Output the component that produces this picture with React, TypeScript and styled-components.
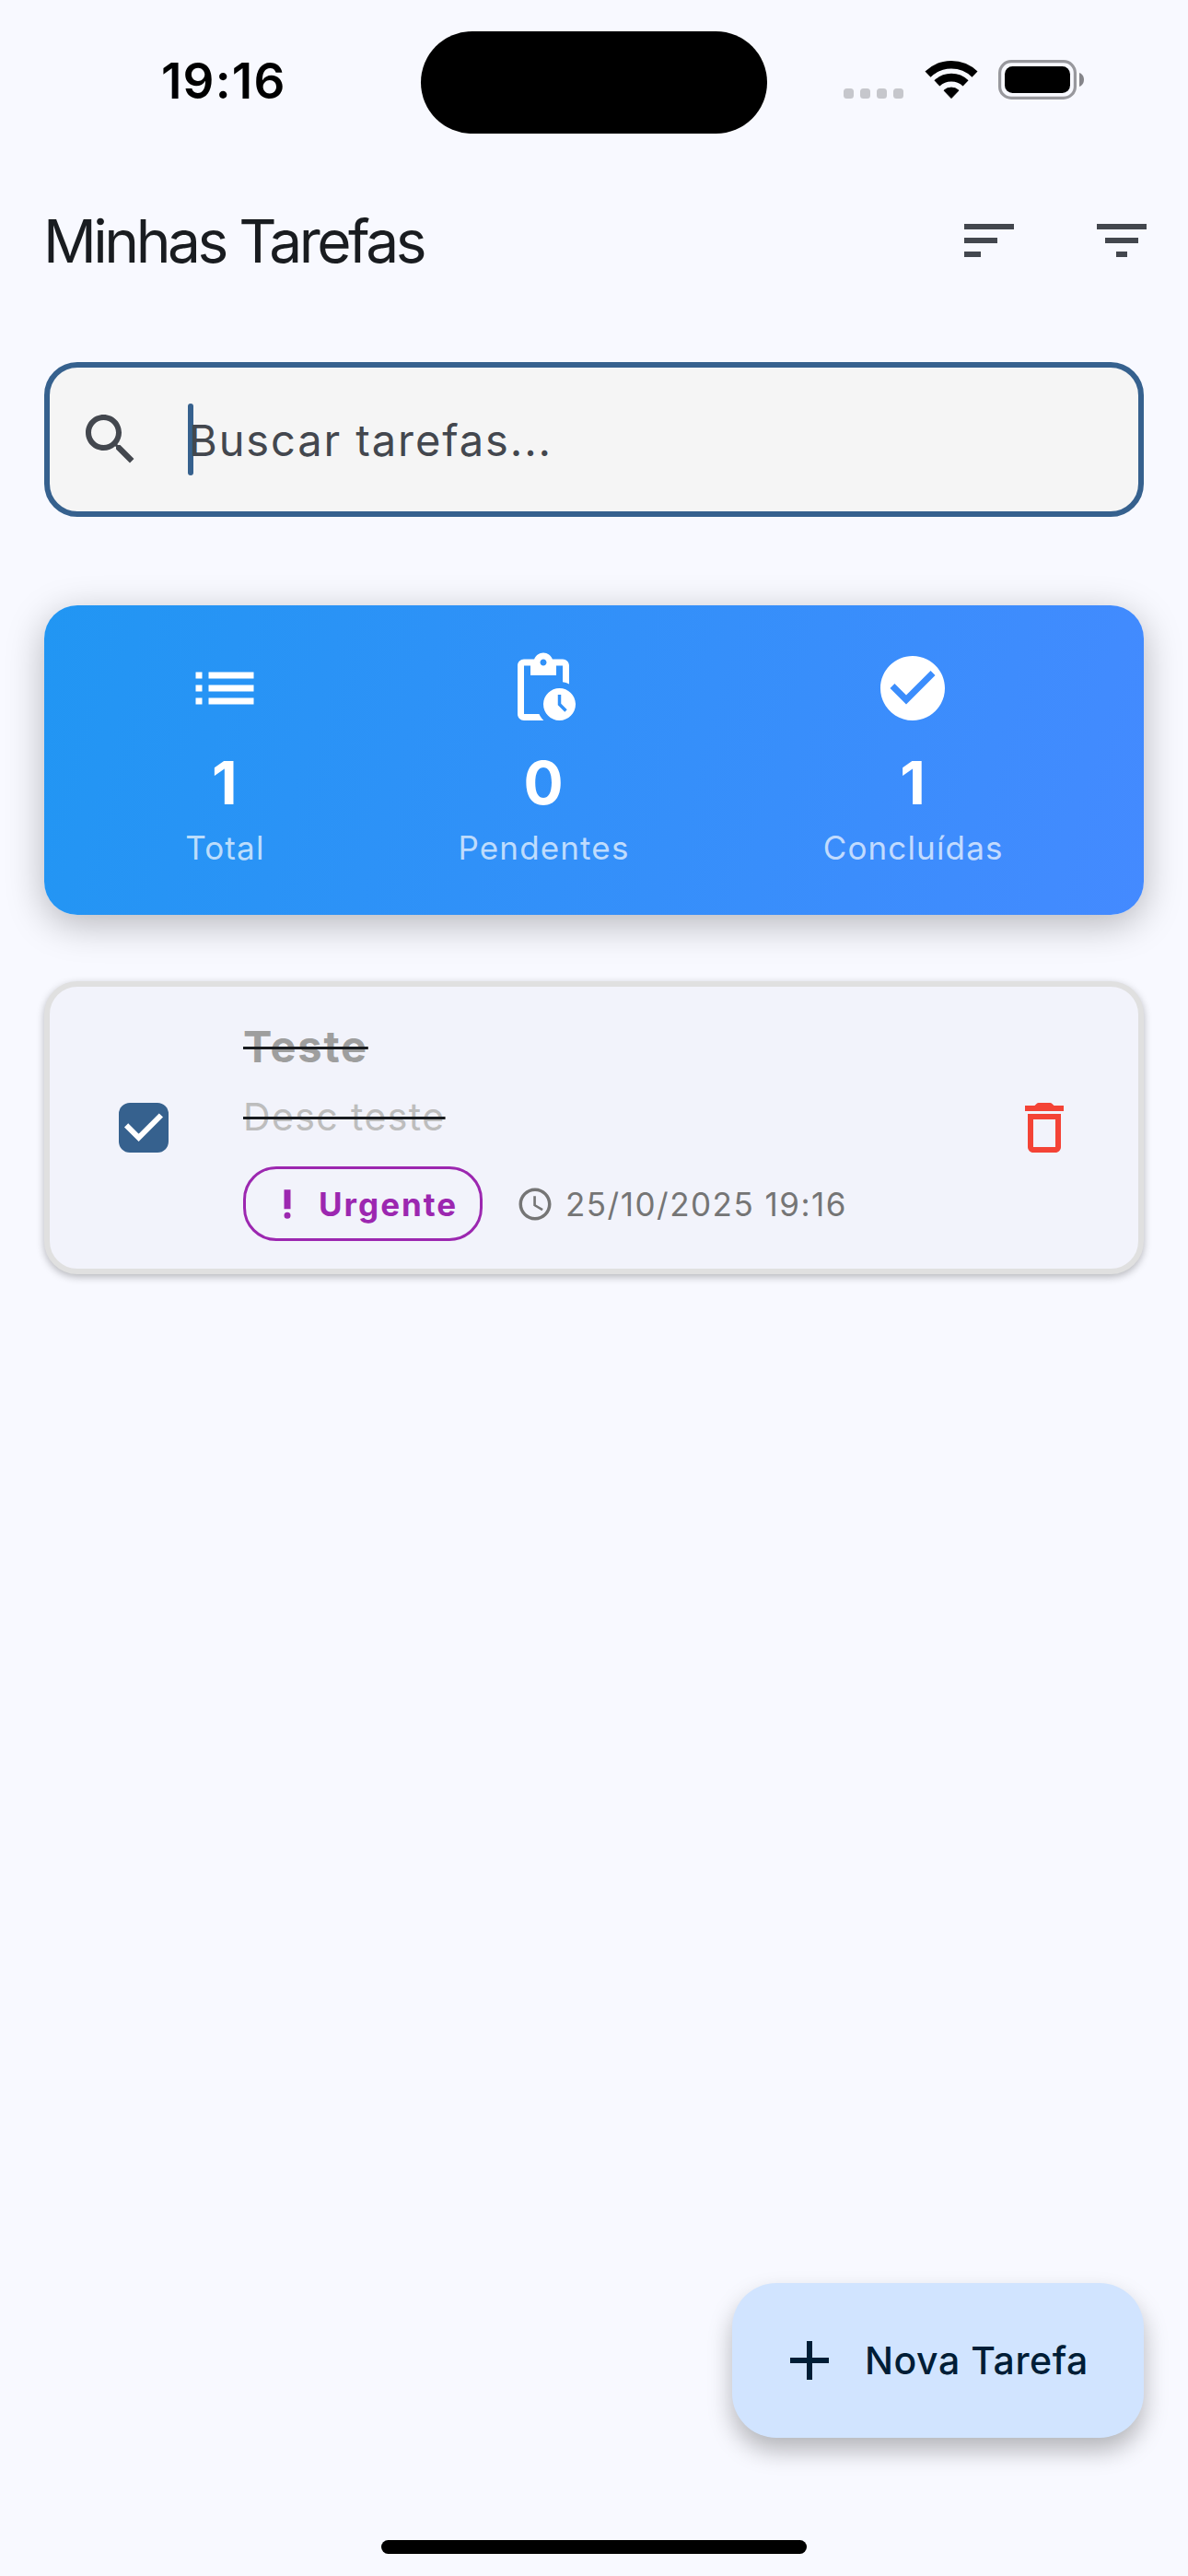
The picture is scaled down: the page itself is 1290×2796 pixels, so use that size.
import React from "react";
import styled, { createGlobalStyle, css } from "styled-components";

const GlobalStyle = createGlobalStyle`
  *, *::before, *::after { box-sizing: border-box; }
  html, body { margin: 0; padding: 0; background: #f8f9ff; }
  body { font-family: Inter, "Liberation Sans", sans-serif; }
`;

const Screen = styled.main`
  width: 1290px;
  height: 2796px;
  display: flex;
  flex-direction: column;
  background: #f8f9ff;
  overflow: hidden;
`;

const StatusBar = styled.header`
  display: grid;
  grid-template-columns: 457px 376px 457px;
  align-items: center;
  height: 177px;
  flex: none;
`;

const Text = styled.span<{ $size: number; $weight?: number; $spacing?: number; $color: string }>`
  display: block;
  white-space: nowrap;
  font-size: ${(p) => p.$size}px;
  line-height: ${(p) => Math.round(p.$size * 1.25)}px;
  font-weight: ${(p) => p.$weight ?? 400};
  letter-spacing: ${(p) => p.$spacing ?? 0}px;
  color: ${(p) => p.$color};
`;

const Time = styled(Text)`
  padding: 0 0 2px 175px;
`;

const Island = styled.div`
  height: 111px;
  margin-top: 1px;
  border-radius: 56px;
  background: #000;
`;

const StatusIcons = styled.div`
  display: flex;
  align-items: flex-end;
  gap: 22px;
  padding: 0 0 3px 83px;
  height: 45px;
`;

const Signal = styled.div`
  display: flex;
  gap: 7px;
  padding-bottom: 1px;
  margin-right: 1px;
`;

const SignalDot = styled.i`
  width: 11px;
  height: 11px;
  border-radius: 3.5px;
  background: #c6c7cc;
`;

const Drawing = styled.svg`
  display: block;
  flex: none;
`;

const AppBar = styled.div`
  display: flex;
  align-items: center;
  height: 168px;
  padding: 0 36px 0 47px;
  flex: none;
`;

const AppTitle = styled(Text)`
  flex: 1;
  margin: 0;
  padding-top: 2px;
`;

const Actions = styled.div`
  display: flex;
  gap: 72px;
`;

const Content = styled.div`
  flex: 1;
  display: flex;
  flex-direction: column;
  padding: 48px 48px 0;
`;

const SearchField = styled.label`
  display: flex;
  align-items: center;
  height: 168px;
  padding-left: 30px;
  border: 6px solid #36618e;
  border-radius: 36px;
  background: #f5f5f5;
`;

const Caret = styled.i`
  width: 6px;
  height: 78px;
  margin-left: 48px;
  border-radius: 3px;
  background: #36618e;
`;

const Placeholder = styled(Text)`
  margin-left: -5px;
  padding-top: 1px;
`;

const StatsCard = styled.section`
  display: flex;
  justify-content: space-around;
  margin-top: 96px;
  height: 336px;
  padding: 48px;
  border-radius: 36px;
  background: linear-gradient(105.7deg, #2196f3, #448aff);
  box-shadow: 0 10px 40px rgba(0, 0, 0, 0.27);
`;

const Stat = styled.div<{ $width: number }>`
  display: flex;
  flex-direction: column;
  align-items: center;
  width: ${(p) => p.$width}px;
`;

const StatValue = styled(Text)`
  margin-top: 21px;
`;

const StatLabel = styled(Text)`
  margin-top: 8px;
  padding-left: 1px;
`;

const TaskCard = styled.article`
  display: flex;
  align-items: center;
  margin-top: 72px;
  height: 318px;
  padding: 0 66px 0 75px;
  border: 6px solid #e0e0e0;
  border-radius: 36px;
  background: #f2f3fb;
  box-shadow: 0 3px 8px rgba(0, 0, 0, 0.27);
`;

const Checkbox = styled.span`
  width: 54px;
  height: 54px;
  border-radius: 12px;
  background: #36618e;
`;

const TaskBody = styled.div`
  flex: 1;
  align-self: stretch;
  display: flex;
  flex-direction: column;
  align-items: flex-start;
  padding: 35px 0 0 81px;
`;

const struck = css`
  text-decoration: line-through;
  text-decoration-color: #191c20;
  text-decoration-thickness: 3px;
`;

const TaskTitle = styled(Text)`
  ${struck}
`;

const TaskDescription = styled(Text)`
  ${struck}
  margin-top: 22px;
`;

const MetaRow = styled.div`
  display: flex;
  align-items: center;
  margin-top: 28px;
`;

const Chip = styled.span`
  display: flex;
  align-items: center;
  gap: 13px;
  width: 260px;
  height: 81px;
  padding-left: 24px;
  margin-right: 36px;
  border: 3px solid #9c27b0;
  border-radius: 36px;
`;

const DateText = styled(Text)`
  margin-left: 12px;
`;

const Footer = styled.footer`
  display: flex;
  flex-direction: column;
  align-items: flex-end;
  padding-right: 48px;
  height: 318px;
  flex: none;
`;

const NewTaskButton = styled.button`
  display: flex;
  align-items: center;
  gap: 24px;
  width: 447px;
  height: 168px;
  padding: 0 0 0 48px;
  border: 0;
  border-radius: 48px;
  background: #d1e4ff;
  font-family: inherit;
  box-shadow: 0 14px 26px rgba(0, 0, 0, 0.27);
`;

const HomeIndicator = styled.div`
  width: 462px;
  height: 15px;
  margin: 111px 366px 0 0;
  border-radius: 8px;
  background: #000;
`;

const ICONS = {
  sort: "M3 18h6v-2H3v2zM3 6v2h18V6H3zm0 7h12v-2H3v2z",
  filter: "M10 18h4v-2h-4v2zM3 6v2h18V6H3zm3 7h12v-2H6v2z",
  search:
    "M15.5 14h-.79l-.28-.27C15.41 12.59 16 11.11 16 9.5 16 5.91 13.09 3 9.5 3S3 5.91 3 9.5 5.91 16 9.5 16c1.61 0 3.09-.59 4.23-1.57l.27.28v.79l5 4.99L20.49 19l-4.99-5zm-6 0C7.01 14 5 11.99 5 9.5S7.01 5 9.5 5 14 7.01 14 9.5 11.99 14 9.5 14z",
  list: "M3 13h2v-2H3v2zm0 4h2v-2H3v2zm0-8h2V7H3v2zm4 4h14v-2H7v2zm0 4h14v-2H7v2zM7 7v2h14V7H7z",
  pending:
    "M17 12c-2.76 0-5 2.24-5 5s2.24 5 5 5 5-2.24 5-5-2.24-5-5-5zm1.65 7.35L16.5 17.2V14h1v2.79l1.85 1.85-.7.71zM18 3h-3.18C14.4 1.84 13.3 1 12 1s-2.4.84-2.82 2H6c-1.1 0-2 .9-2 2v15c0 1.1.9 2 2 2h6.11c-.59-.57-1.07-1.25-1.42-2H6V5h2v3h8V5h2v5.08c.71.1 1.38.31 2 .6V5c0-1.1-.9-2-2-2zm-6 2c-.55 0-1-.45-1-1s.45-1 1-1 1 .45 1 1-.45 1-1 1z",
  done: "M12 2C6.48 2 2 6.48 2 12s4.48 10 10 10 10-4.48 10-10S17.52 2 12 2zm-2 15l-5-5 1.41-1.41L10 14.17l7.59-7.59L19 8l-9 9z",
  priority: "M10 3h4v12h-4zM12 17a2 2 0 1 0 0 4 2 2 0 0 0 0-4z",
  clock:
    "M11.99 2C6.47 2 2 6.48 2 12s4.47 10 9.99 10C17.52 22 22 17.52 22 12S17.52 2 11.99 2zM12 20c-4.42 0-8-3.58-8-8s3.58-8 8-8 8 3.58 8 8-3.58 8-8 8zm.5-13H11v6l5.25 3.15.75-1.23-4.5-2.67z",
  trash:
    "M6 19c0 1.1.9 2 2 2h8c1.1 0 2-.9 2-2V7H6v12zM8 9h8v10H8V9zm7.5-5l-.7-.7q-.3-.3-.7-.3h-4.2q-.4 0-.7.3l-.7.7H5v2h14V4h-3.5z",
  plus: "M19 13h-6v6h-2v-6H5v-2h6V5h2v6h6v2z",
};

function Icon({ name, size, color }: { name: keyof typeof ICONS; size: number; color: string }) {
  return (
    <Drawing width={size} height={size} viewBox="0 0 24 24" fill={color} aria-hidden>
      <path d={ICONS[name]} />
    </Drawing>
  );
}

function WifiIcon() {
  return (
    <Drawing width="58" height="43" viewBox="0 0 58 43" aria-hidden>
      <path
        d="M29 41.6 21 33.2a11.8 11.8 0 0 1 16 0z"
        stroke="#000"
        strokeWidth="1"
        strokeLinejoin="round"
      />
      <path d="M13.4 25.4a22.5 22.5 0 0 1 31.2 0" fill="none" stroke="#000" strokeWidth="8.6" />
      <path d="M3.5 15.6a36.5 36.5 0 0 1 51 0" fill="none" stroke="#000" strokeWidth="8.6" />
    </Drawing>
  );
}

function BatteryIcon() {
  return (
    <Drawing width="94" height="43" viewBox="0 0 94 43" aria-hidden>
      <rect x="1.6" y="1.6" width="81.8" height="39.8" rx="12.5" fill="none" stroke="#98989d" strokeWidth="3.2" />
      <rect x="7" y="7" width="71" height="29" rx="8.5" />
      <path d="M88 14c3 1 5 4 5 7.5s-2 6.5-5 7.5z" fill="#85858a" />
    </Drawing>
  );
}

const STATS: { icon: keyof typeof ICONS; value: number; label: string; width: number }[] = [
  { icon: "list", value: 1, label: "Total", width: 86 },
  { icon: "pending", value: 0, label: "Pendentes", width: 187 },
  { icon: "done", value: 1, label: "Concluídas", width: 196 },
];

export default function App() {
  return (
    <>
      <GlobalStyle />
      <Screen>
        <StatusBar>
          <Time $size={53} $weight={600} $spacing={1.2} $color="#000">19:16</Time>
          <Island />
          <StatusIcons>
            <Signal>
              <SignalDot />
              <SignalDot />
              <SignalDot />
              <SignalDot />
            </Signal>
            <WifiIcon />
            <BatteryIcon />
          </StatusIcons>
        </StatusBar>

        <AppBar>
          <AppTitle as="h1" $size={64} $spacing={-3.5} $color="#191c20">Minhas Tarefas</AppTitle>
          <Actions>
            <Icon name="sort" size={72} color="#43474e" />
            <Icon name="filter" size={72} color="#43474e" />
          </Actions>
        </AppBar>

        <Content>
          <SearchField>
            <Icon name="search" size={72} color="#43474e" />
            <Caret />
            <Placeholder $size={47} $spacing={1.9} $color="#43474e">Buscar tarefas...</Placeholder>
          </SearchField>

          <StatsCard>
            {STATS.map((s) => (
              <Stat key={s.label} $width={s.width}>
                <Icon name={s.icon} size={84} color="#fff" />
                <StatValue $size={64} $weight={700} $color="#fff">{s.value}</StatValue>
                <StatLabel $size={35} $spacing={1.15} $color="rgba(255,255,255,0.7)">{s.label}</StatLabel>
              </Stat>
            ))}
          </StatsCard>

          <TaskCard>
            <Checkbox>
              <Drawing width="54" height="54" viewBox="0 0 18 18" fill="none" stroke="#fff" strokeWidth="2">
                <path d="M2.7 8.1 7.2 12.6 15.3 4.5" />
              </Drawing>
            </Checkbox>
            <TaskBody>
              <TaskTitle $size={47} $weight={700} $spacing={1.8} $color="#9e9e9e">Teste</TaskTitle>
              <TaskDescription $size={41} $spacing={1.4} $color="#bdbdbd">Desc teste</TaskDescription>
              <MetaRow>
                <Chip>
                  <Icon name="priority" size={42} color="#9c27b0" />
                  <Text $size={35} $weight={700} $spacing={2} $color="#9c27b0">Urgente</Text>
                </Chip>
                <Icon name="clock" size={42} color="#757575" />
                <DateText $size={35} $spacing={1.5} $color="#757575">25/10/2025 19:16</DateText>
              </MetaRow>
            </TaskBody>
            <Icon name="trash" size={72} color="#f44336" />
          </TaskCard>
        </Content>

        <Footer>
          <NewTaskButton>
            <Icon name="plus" size={72} color="#001d36" />
            <Text $size={41} $weight={500} $spacing={0.55} $color="#001d36">Nova Tarefa</Text>
          </NewTaskButton>
          <HomeIndicator />
        </Footer>
      </Screen>
    </>
  );
}
